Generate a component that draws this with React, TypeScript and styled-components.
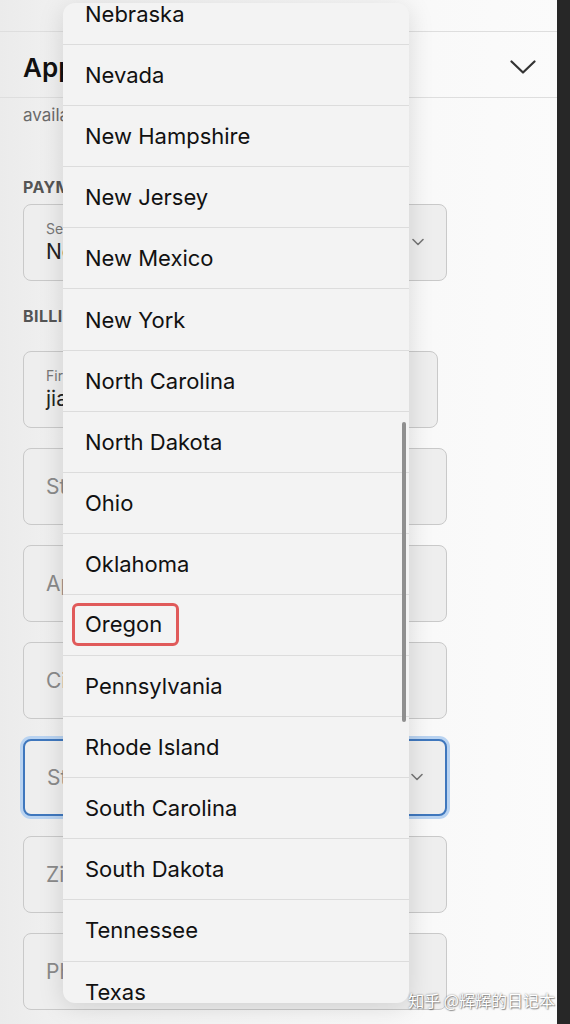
import React from 'react';
import styled, { createGlobalStyle } from 'styled-components';

const GlobalStyle = createGlobalStyle`
  html, body {
    margin: 0;
    padding: 0;
    background: #272727;
  }
  body {
    font-family: Inter, "Noto Sans", "Liberation Sans", sans-serif;
    -webkit-font-smoothing: antialiased;
  }
`;

const Screen = styled.div`
  position: relative;
  display: flex;
  width: 570px;
  height: 1024px;
  overflow: hidden;
`;

const Sheet = styled.div`
  display: flex;
  flex-direction: column;
  width: 557px;
  height: 100%;
  background: linear-gradient(to right, #ebebeb 0%, #f2f2f2 14%, #f7f7f7 55%, #fbfbfb 100%);
`;

const DarkEdge = styled.div`
  flex: 1;
  background: #272727;
`;

const TopBand = styled.div`
  height: 31px;
  border-bottom: 1px solid #dedede;
`;

const Header = styled.div`
  box-sizing: border-box;
  display: flex;
  align-items: center;
  justify-content: space-between;
  height: 66px;
  padding: 5px 21px 0 23px;
  border-bottom: 1px solid #dedede;

  h2 {
    margin: 0;
    font-size: 26px;
    font-weight: 600;
    color: #111;
  }
`;

const Body = styled.div`
  display: flex;
  flex-direction: column;
  padding: 0 0 0 23px;
`;

const Note = styled.p`
  margin: 7px 0 0;
  font-size: 17px;
  line-height: 20px;
  color: #6a6a6a;
`;

const SectionLabel = styled.div<{ $top: number }>`
  margin-top: ${(p) => p.$top}px;
  font-size: 16px;
  line-height: 20px;
  font-weight: 700;
  letter-spacing: 0.4px;
  color: #555;
`;

const Field = styled.div<{ $width?: number; $focused?: boolean; $top?: number }>`
  box-sizing: border-box;
  position: relative;
  display: flex;
  flex-direction: column;
  justify-content: center;
  width: ${(p) => p.$width ?? 424}px;
  height: 77px;
  margin-top: ${(p) => p.$top ?? 20}px;
  padding: 0 22px;
  border-radius: 8px;
  background: #eeeeee;
  border: ${(p) => (p.$focused ? '2px solid #3f77bd' : '1px solid #c9c9c9')};
  box-shadow: ${(p) => (p.$focused ? '0 0 0 3px #b9d3f1' : 'none')};
`;

const FieldLabel = styled.span`
  font-size: 14px;
  line-height: 18px;
  color: #777;
`;

const FieldValue = styled.span`
  font-size: 21px;
  line-height: 28px;
  color: #222;
`;

const Placeholder = styled.span`
  font-size: 21px;
  color: #8a8a8a;
`;

const SmallChevron = styled.svg`
  position: absolute;
  right: 22px;
  top: 50%;
  margin-top: -5px;
`;

const Popup = styled.div`
  position: absolute;
  left: 63px;
  top: 3px;
  width: 346px;
  height: 1000px;
  border-radius: 12px;
  overflow: hidden;
  background: #f3f3f3;
  box-shadow: 0 4px 26px rgba(0, 0, 0, 0.13);
`;

const OptionList = styled.ul`
  margin: -19px 0 0;
  padding: 0;
  list-style: none;
`;

const Option = styled.li`
  box-sizing: border-box;
  display: flex;
  align-items: center;
  height: 61.1px;
  padding-left: 22px;
  border-bottom: 1px solid #dcdcdc;
  font-size: 22px;
  color: #111;
`;

const Marked = styled.span`
  margin-left: -13px;
  padding: 5px 14px 5px 10px;
  line-height: 27px;
  border: 3px solid #e05a5a;
  border-radius: 6px;
`;

const ScrollThumb = styled.div`
  position: absolute;
  right: 3px;
  top: 419px;
  width: 4px;
  height: 300px;
  border-radius: 2px;
  background: #8f8f8f;
`;

const Watermark = styled.div`
  position: absolute;
  right: 15px;
  bottom: 12px;
  font-family: "Noto Sans CJK SC", sans-serif;
  font-size: 16px;
  color: #fff;
  text-shadow: 0 0 2px rgba(0, 0, 0, 0.55), 1px 1px 1px rgba(0, 0, 0, 0.35);
`;

const states = [
  'Nebraska',
  'Nevada',
  'New Hampshire',
  'New Jersey',
  'New Mexico',
  'New York',
  'North Carolina',
  'North Dakota',
  'Ohio',
  'Oklahoma',
  'Oregon',
  'Pennsylvania',
  'Rhode Island',
  'South Carolina',
  'South Dakota',
  'Tennessee',
  'Texas',
];

const Chevron: React.FC = () => (
  <SmallChevron width="12" height="8" viewBox="0 0 12 8" fill="none">
    <path d="M1 1.5l5 5 5-5" stroke="#777" strokeWidth="1.6" strokeLinecap="round" strokeLinejoin="round" />
  </SmallChevron>
);

const App: React.FC = () => {
  return (
    <>
      <GlobalStyle />
      <Screen>
        <Sheet>
          <TopBand />
          <Header>
            <h2>Apply</h2>
            <svg width="26" height="14" viewBox="0 0 26 14" fill="none">
              <path d="M1.5 1.5l11.5 11 11.5-11" stroke="#333" strokeWidth="2.2" strokeLinecap="round" strokeLinejoin="round" />
            </svg>
          </Header>
          <Body>
            <Note>available</Note>
            <SectionLabel $top={52}>PAYMENT</SectionLabel>
            <Field $top={7}>
              <FieldLabel>Select</FieldLabel>
              <FieldValue>None</FieldValue>
              <Chevron />
            </Field>
            <SectionLabel $top={25}>BILLING</SectionLabel>
            <Field $top={25} $width={415}>
              <FieldLabel>First</FieldLabel>
              <FieldValue>jia</FieldValue>
            </Field>
            <Field>
              <Placeholder>Street</Placeholder>
            </Field>
            <Field>
              <Placeholder>Apt</Placeholder>
            </Field>
            <Field>
              <Placeholder>City</Placeholder>
            </Field>
            <Field $focused>
              <Placeholder>State</Placeholder>
              <Chevron />
            </Field>
            <Field>
              <Placeholder>Zip</Placeholder>
            </Field>
            <Field>
              <Placeholder>Phone</Placeholder>
            </Field>
          </Body>
        </Sheet>
        <DarkEdge />

        <Popup>
          <OptionList>
            {states.map((s) => (
              <Option key={s}>{s === 'Oregon' ? <Marked>{s}</Marked> : s}</Option>
            ))}
          </OptionList>
          <ScrollThumb />
        </Popup>

        <Watermark>知乎 @辉辉的日记本</Watermark>
      </Screen>
    </>
  );
};

export default App;
